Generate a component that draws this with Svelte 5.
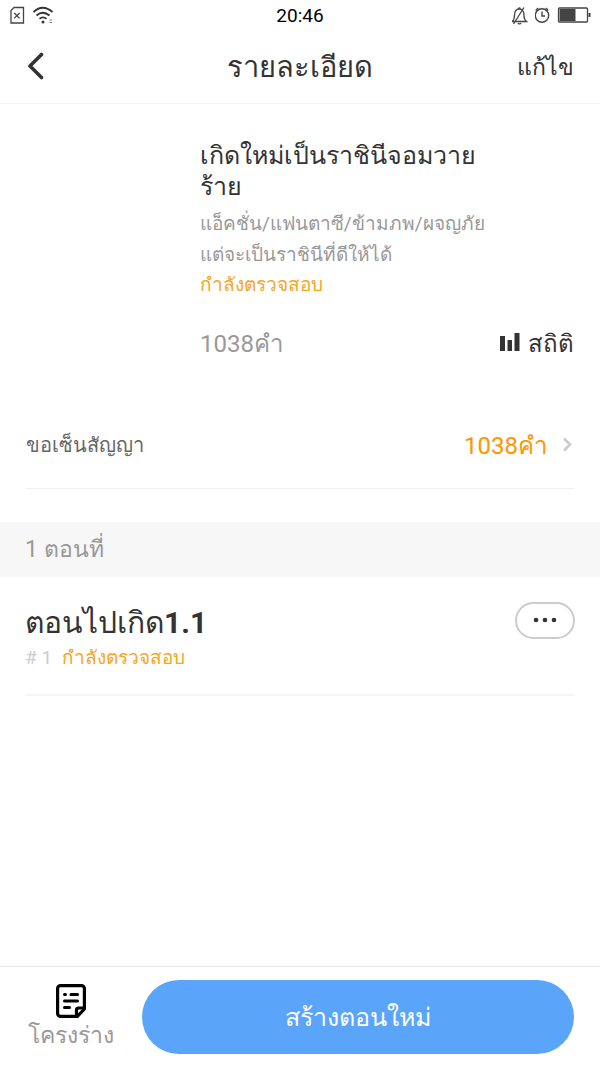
<script>
    const book = {
        title: "เกิดใหม่เป็นราชินีจอมวายร้าย",
        tags: ["แอ็คชั่น", "แฟนตาซี", "ข้ามภพ", "ผจญภัย"],
        intro: "แต่จะเป็นราชินีที่ดีให้ได้",
        status: "กำลังตรวจสอบ",
        words: 1038
    }

    const chapters = [
        { id: 1, name: "ตอนไปเกิด", part: "1.1", status: "กำลังตรวจสอบ" }
    ]
</script>

<div class="page">
    <div class="status">
        <div class="icons">
            <svg width="16" height="20" viewBox="0 0 16 20" fill="none" stroke="#444" stroke-width="1.3">
                <path d="M5 1.500h9.500V17H2V4.500z" />
                <path d="M5.2 7l5.4 5.4M10.6 7l-5.4 5.4" />
            </svg>
            <svg width="22" height="20" viewBox="0 0 22 20" fill="none" stroke="#333" stroke-width="1.8">
                <path d="M.5 6Q9.800 -2.500 19.500 6M3.500 9.500Q9.800 4 16.500 9.500M6.500 12.700Q9.800 10 13.500 12.700" />
                <circle cx="10" cy="16" r="1.500" fill="#333" stroke="none" />
                <path d="M16.500 14h2.500M16.500 16.500h2.500" stroke="#777" stroke-width="1" />
            </svg>
        </div>
        <span class="clock">20:46</span>
        <div class="icons right">
            <svg width="17" height="20" viewBox="0 0 17 20" fill="none" stroke="#444" stroke-width="1.3">
                <path d="M0 15.500h14.500c-2-1.500-2.500-3-2.500-6C12 5.500 10.500 3 7.300 3S2.500 5.500 2.500 9.500c0 3-.5 4.500-2.500 6zM6 17c.5 1.300 2.500 1.300 3 0M6.300 3c0-1.500 2-1.500 2 0M1.500 18L12 1.500" />
            </svg>
            <svg width="16" height="20" viewBox="0 0 16 20" fill="none" stroke="#444" stroke-width="1.400">
                <circle cx="7" cy="9.500" r="6.700" />
                <path d="M7 5.500V10h3M.7 4.500L3.200 2M13.300 4.500L10.800 2" />
            </svg>
            <svg width="34" height="20" viewBox="0 0 34 20" fill="none">
                <rect x="1.500" y="2" width="29" height="14" rx="1" stroke="#444" stroke-width="1.300" />
                <path d="M2.500 3h16v12h-16z" fill="#444" />
                <path d="M31.500 7h2v4h-2z" fill="#444" />
            </svg>
        </div>
    </div>

    <header>
        <button class="back" aria-label="กลับ">
            <svg width="20" height="30" viewBox="0 0 20 30" fill="none" stroke="#333" stroke-width="3.600" stroke-linecap="round" stroke-linejoin="round">
                <path d="M15.500 2.500L4 14l11.500 11.500" />
            </svg>
        </button>
        <h1>รายละเอียด</h1>
        <button class="edit">แก้ไข</button>
    </header>

    <section class="book">
        <h2>{book.title}</h2>
        <p class="tags">{book.tags.join("/")}</p>
        <p class="intro">{book.intro}</p>
        <p class="state">{book.status}</p>
        <div class="row">
            <span class="words">{book.words}คำ</span>
            <button class="stats">
                <svg width="20" height="22" viewBox="0 0 20 22" fill="#333">
                    <path d="M0 3h5v15H0zM7.500 7h4.500v11H7.500zM14.500 0h5v18h-5z" />
                </svg>
                สถิติ
            </button>
        </div>
    </section>

    <a class="contract" href="#contract">
        <span>ขอเซ็นสัญญา</span>
        <span class="amount">{book.words}คำ</span>
        <svg width="12" height="16" viewBox="0 0 12 16" fill="none" stroke="#ccc" stroke-width="2.600">
            <path d="M2 1.500l6 6-6 6" />
        </svg>
    </a>

    <h3>{chapters.length} ตอนที่</h3>

    <ul>
        {#each chapters as chapter}
            <li>
                <div>
                    <p class="name">{chapter.name}<b>{chapter.part}</b></p>
                    <p class="meta"><span># {chapter.id}</span>{chapter.status}</p>
                </div>
                <button class="more" aria-label="เพิ่มเติม">
                    <svg width="24" height="8" viewBox="0 0 24 8" fill="#333">
                        <circle cx="3" cy="3" r="2.300" />
                        <circle cx="12" cy="3" r="2.300" />
                        <circle cx="21" cy="3" r="2.300" />
                    </svg>
                </button>
            </li>
        {/each}
    </ul>

    <footer>
        <button class="draft">
            <svg width="30" height="34" viewBox="0 0 30 34" fill="none" stroke="#000" stroke-width="3.200" stroke-linecap="round" stroke-linejoin="round">
                <path d="M4.600 1.600h20.800a3 3 0 0 1 3 3V25l-7 7.400H4.600a3 3 0 0 1-3-3V4.600a3 3 0 0 1 3-3z" />
                <path d="M20.500 31.500V26a2 2 0 0 1 2-2h5.500" />
                <path d="M8.500 10.500h1M15 10.500h6.500M8.500 17h13M8.500 23.500h5" stroke-width="3" />
            </svg>
            โครงร่าง
        </button>
        <button class="create">สร้างตอนใหม่</button>
    </footer>
</div>

<style>
    :global(body) {
        margin: 0;
        background: #fff;
    }

    .page {
        display: flex;
        flex-direction: column;
        min-height: 100vh;
        font-family: Roboto, sans-serif;
        color: #333;
    }

    h1, h2, h3, p, ul {
        margin: 0;
        padding: 0;
        font-weight: 400;
    }

    button {
        padding: 0;
        border: 0;
        background: none;
        font: inherit;
        color: inherit;
        cursor: pointer;
    }

    svg {
        display: block;
        flex: none;
    }

    .status, header {
        display: grid;
        grid-template-columns: 1fr auto 1fr;
        align-items: center;
    }

    .status {
        height: 31px;
        padding: 0 9px;
    }

    .icons {
        display: flex;
        gap: 8px;
    }

    .icons.right {
        justify-content: flex-end;
        gap: 6px;
    }

    .clock {
        font-size: 19px;
        color: #000;
    }

    header {
        height: 72px;
        padding: 0 26px;
        border-bottom: 1px solid #f5f5f5;
    }

    .back {
        justify-self: start;
    }

    h1 {
        font-size: 29px;
    }

    .edit {
        justify-self: end;
        font-size: 23px;
    }

    .book {
        padding: 36px 26px 0 200px;
    }

    h2 {
        max-width: 300px;
        font-size: 25px;
        line-height: 31px;
    }

    .tags, .intro, .state {
        font-size: 19px;
        line-height: 31px;
        color: #999;
    }

    .tags {
        margin-top: 6px;
    }

    .state {
        color: #f5a623;
        line-height: 30px;
    }

    .row {
        display: flex;
        align-items: center;
        justify-content: space-between;
        margin-top: 28px;
        font-size: 24px;
        line-height: 32px;
    }

    .words {
        color: #999;
    }

    .stats {
        display: flex;
        align-items: center;
        gap: 8px;
    }

    .contract {
        display: flex;
        align-items: center;
        margin: 42px 26px 33px;
        height: 86px;
        border-bottom: 1px solid #f0f0f0;
        font-size: 20px;
        color: #666;
        text-decoration: none;
    }

    .amount {
        margin: 0 15px 0 auto;
        font-size: 24px;
        color: #ff9500;
    }

    h3 {
        padding: 0 25px;
        background: #f7f7f7;
        font-size: 23px;
        line-height: 55px;
        color: #999;
    }

    ul {
        padding: 0 25px;
        list-style: none;
    }

    li {
        display: flex;
        justify-content: space-between;
        padding: 25px 0 22px;
        border-bottom: 2px solid #f7f7f7;
    }

    .name {
        font-size: 30px;
        line-height: 42px;
    }

    .meta {
        font-size: 19px;
        line-height: 28px;
        color: #f5a623;
    }

    .meta span {
        margin-right: 10px;
        color: #ccc;
    }

    .more {
        display: flex;
        align-items: center;
        justify-content: center;
        width: 60px;
        height: 37px;
        border: 2px solid #ccc;
        border-radius: 19px;
    }

    footer {
        display: flex;
        align-items: center;
        gap: 26px;
        margin-top: auto;
        padding: 13px 26px;
        border-top: 1px solid #e8e8e8;
    }

    .draft {
        display: flex;
        flex-direction: column;
        align-items: center;
        min-width: 90px;
        padding-top: 4px;
        font-size: 23px;
        line-height: 36px;
        color: #999;
    }

    .create {
        flex: 1;
        height: 74px;
        border-radius: 37px;
        background: #5aa5f9;
        font-size: 25px;
        color: #fff;
    }
</style>
